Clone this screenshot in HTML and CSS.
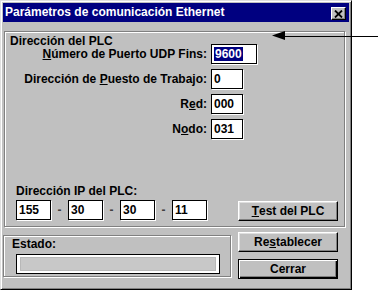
FILE: index.html
```html
<!DOCTYPE html>
<html lang="es">
<head>
<meta charset="utf-8">
<title>Parámetros de comunicación Ethernet</title>
<link rel="stylesheet" href="styles.css">
</head>
<body>
<div class="window">
  <div class="titlebar">
    <span class="title">Parámetros de comunicación Ethernet</span>
    <span class="close"><svg width="9" height="8" viewBox="0 0 9 8"><path d="M1 0.5 L8 7.5 M8 0.5 L1 7.5" stroke="#000" stroke-width="1.8"/></svg></span>
  </div>
  <div class="group plc">
    <div class="legend">Dirección del PLC</div>
    <div class="fields">
      <div class="row"><span class="lbl"><u>N</u>úmero de Puerto UDP Fins:</span><span class="edit wide"><span class="sel">9600</span></span></div>
      <div class="row"><span class="lbl">Dirección de <u>P</u>uesto de Trabajo:</span><span class="edit">0</span></div>
      <div class="row"><span class="lbl">R<u>e</u>d:</span><span class="edit">000</span></div>
      <div class="row"><span class="lbl">N<u>o</u>do:</span><span class="edit">031</span></div>
    </div>
    <div class="ip">
      <div class="ip-label">Dirección IP del PLC:</div>
      <div class="ip-row">
        <span class="edit ipbox">155</span><span class="dash">-</span>
        <span class="edit ipbox">30</span><span class="dash">-</span>
        <span class="edit ipbox">30</span><span class="dash">-</span>
        <span class="edit ipbox">11</span>
        <span class="btn test"><u>T</u>est del PLC</span>
      </div>
    </div>
  </div>
  <div class="bottom">
    <div class="group estado">
      <div class="legend2">Estado:</div>
      <div class="progress"><div class="bar"></div></div>
    </div>
    <div class="buttons">
      <span class="btn">Re<u>s</u>tablecer</span>
      <span class="btn default">Cerrar</span>
    </div>
  </div>
</div>
<svg class="arrow" width="110" height="12" viewBox="0 0 110 12"><polygon points="4,5.5 17,1 17,10" fill="#000"/><line x1="14" y1="6.5" x2="110" y2="6.5" stroke="#000" stroke-width="1"/></svg>
</body>
</html>
```
FILE: styles.css
```css
* { box-sizing: border-box; }
body {
  margin: 0;
  width: 378px;
  height: 291px;
  background: #fff;
  position: relative;
  overflow: hidden;
  font: bold 12px "Liberation Sans", Arial, sans-serif;
  color: #000;
}
u { text-decoration: underline; text-underline-offset: 1px; }
.window {
  width: 352px;
  height: 290px;
  background: #c0c0c0;
  border: 1px solid;
  border-color: #dfdfdf #000 #000 #dfdfdf;
  box-shadow: inset 1px 1px #fff, inset -1px -1px #808080;
  padding: 2px;
  display: flex;
  flex-direction: column;
}
.titlebar {
  height: 19px;
  background: #000080;
  color: #fff;
  display: flex;
  align-items: flex-start;
  padding-left: 2px;
  line-height: 19px;
}
.title { flex: 1; }
.close {
  width: 15px;
  height: 13px;
  margin: 4px 3px 0 0;
  background: #c0c0c0;
  border: 1px solid;
  border-color: #fff #000 #000 #fff;
  box-shadow: inset -1px -1px #808080;
  display: flex;
  align-items: center;
  justify-content: center;
}
.close svg { display: block; }
.group {
  border: 1px solid #808080;
  box-shadow: 1px 1px 0 #fff, inset 1px 1px 0 #fff;
}
.plc {
  margin: 9px 0 0 1px;
  width: 341px;
  height: 196px;
  display: flex;
  flex-direction: column;
  padding: 3px 0 5px 0;
}
.legend {
  line-height: 12px;
  padding-left: 5px;
}
.fields {
  margin-top: -3px;
  display: flex;
  flex-direction: column;
  gap: 5px;
}
.row {
  display: flex;
  align-items: center;
  gap: 4px;
  height: 20px;
}
.lbl {
  width: 202px;
  text-align: right;
  white-space: nowrap;
}
.edit {
  display: flex;
  align-items: center;
  width: 32px;
  height: 20px;
  background: #fff;
  border: 1px solid #000;
  box-shadow: 1px 1px 0 #fff;
  padding-left: 2px;
  line-height: 14px;
}
.edit.wide { width: 46px; }
.sel {
  background: #000080;
  color: #fff;
  padding: 0 1px;
  line-height: 14px;
}
.ip { margin-top: auto; }
.ip-label {
  line-height: 14px;
  padding-left: 11px;
}
.ip-row {
  margin-top: 2px;
  display: flex;
  align-items: flex-end;
  padding: 0 6px 0 11px;
  height: 21px;
}
.ipbox {
  width: 35px;
  margin-bottom: 1px;
}
.dash {
  width: 17px;
  text-align: center;
  color: #404040;
  line-height: 20px;
  margin-bottom: 1px;
}
.btn {
  display: flex;
  align-items: center;
  justify-content: center;
  width: 100px;
  height: 20px;
  background: #c0c0c0;
  border: 1px solid;
  border-color: #fff #000 #000 #fff;
  box-shadow: inset -1px -1px #808080, inset 1px 1px #dfdfdf;
  line-height: 14px;
}
.test { margin-left: auto; }
.default {
  border: 1px solid #000;
  box-shadow: inset 1px 1px #fff, inset -1px -1px #000, inset -2px -2px #808080;
}
.bottom {
  display: flex;
  align-items: flex-start;
  margin-top: 5px;
}
.estado {
  margin-top: 3px;
  width: 228px;
  height: 42px;
  padding: 1px 0 0 0;
}
.legend2 {
  line-height: 14px;
  padding-left: 8px;
}
.progress {
  margin: 3px 0 0 12px;
  width: 204px;
  height: 20px;
  border: 1px solid #000;
  background: #fff;
  padding: 2px 3px 2px 3px;
}
.bar {
  height: 100%;
  background: #c8c8c8;
  border: 1px solid #b8b8b8;
}
.buttons {
  margin-left: 7px;
  display: flex;
  flex-direction: column;
  gap: 7px;
}
.arrow {
  position: absolute;
  left: 268px;
  top: 30px;
}
```
